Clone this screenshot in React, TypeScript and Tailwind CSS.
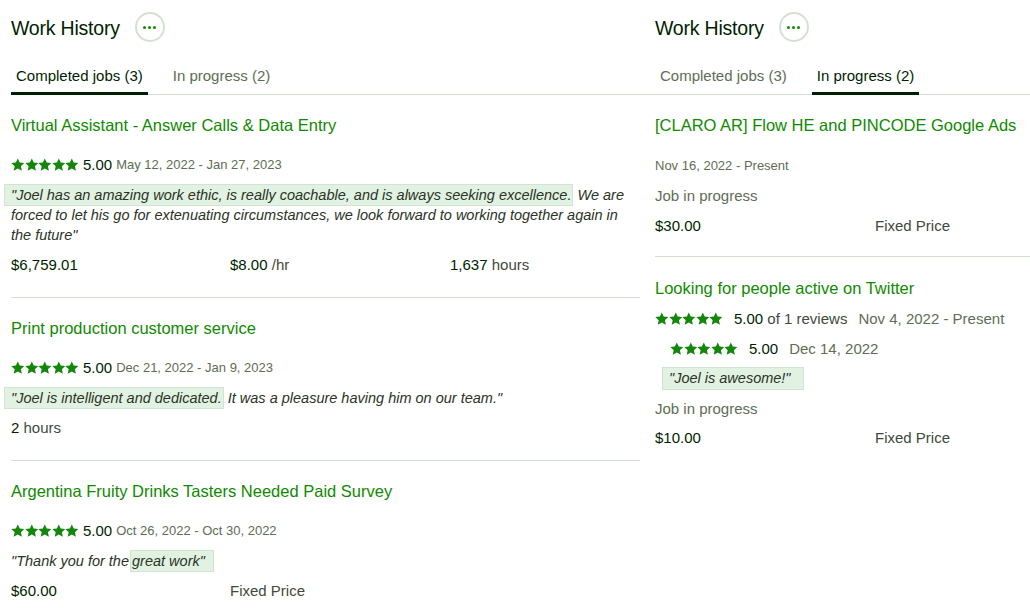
import React from "react";

const Star = () => (
  <svg width="13.6" height="13.6" viewBox="0 0 24 24" className="shrink-0">
    <path
      d="M12 0.8l3.4 7.3 8 .9-5.9 5.5 1.7 7.9L12 18.4l-7.2 4 1.7-7.9L.6 9l8-.9z"
      fill="#14870a"
    />
  </svg>
);

const Stars = () => (
  <span className="inline-flex items-center">
    <Star />
    <Star />
    <Star />
    <Star />
    <Star />
  </span>
);

const MoreBtn = () => (
  <div className="w-[30px] h-[30px] rounded-full border-2 border-[#d5e0d5] flex items-center justify-center gap-[2px] -mt-[4px] ml-[15px]">
    <span className="w-[3px] h-[3px] rounded-full bg-[#108a00]" />
    <span className="w-[3px] h-[3px] rounded-full bg-[#108a00]" />
    <span className="w-[3px] h-[3px] rounded-full bg-[#108a00]" />
  </div>
);

const Tabs = ({ active }: { active: 0 | 1 }) => (
  <div className="h-[37px] border-b border-[#d5e0d5] flex gap-[20px]">
    {["Completed jobs (3)", "In progress (2)"].map((t, i) => (
      <div
        key={t}
        className={
          i === active
            ? "h-[37px] px-[5px] pt-[8px] border-b-[3px] border-[#001e00] text-[15px] leading-[20px] text-[#001e00]"
            : "h-[37px] px-[5px] pt-[8px] text-[15px] leading-[20px] text-[#5e6d55]"
        }
      >
        {t}
      </div>
    ))}
  </div>
);

const TitleRow = () => (
  <div className="h-[58px] flex items-center">
    <h2 className="text-[19.5px] text-[#001e00] leading-none tracking-[-0.2px]">Work History</h2>
    <MoreBtn />
  </div>
);

const Title = ({ children }: { children: React.ReactNode }) => (
  <div className="text-[16.5px] leading-[22px] text-[#108a00]">{children}</div>
);

const hl =
  "bg-[#e2f2e2] border border-[#cfe5cf] pl-[6px] pr-[1px] py-[2px] -ml-[7px]";

export default function App() {
  return (
    <div
      className="w-[1030px] h-[616px] bg-white flex overflow-hidden text-[#001e00]"
      style={{ fontFamily: '"Liberation Sans", Arial, sans-serif' }}
    >
      {/* Left panel */}
      <div className="w-[645px] shrink-0">
        <div className="pl-[11px]">
          <TitleRow />
          <Tabs active={0} />
        </div>
        <div className="pl-[11px] pr-[5px]">
          {/* Job 1 */}
          <div className="pt-[19px] pb-[22px] border-b border-[#d5e0d5]">
            <Title>Virtual Assistant - Answer Calls &amp; Data Entry</Title>
            <div className="mt-[19px] h-[20px] flex items-center gap-[4px]">
              <Stars />
              <span className="text-[15px]">5.00</span>
              <span className="text-[13px] text-[#5e6d55]">May 12, 2022 - Jan 27, 2023</span>
            </div>
            <p className="mt-[10px] text-[14.5px] leading-[20px] italic text-[#2a3326]">
              <span className={hl}>
                "Joel has an amazing work ethic, is really coachable, and is always seeking excellence.
              </span>{" "}
              We are forced to let his go for extenuating circumstances, we look forward to working
              together again in the future"
            </p>
            <div className="mt-[10px] grid grid-cols-[219px_220px_1fr] text-[15px] leading-[20px]">
              <span>$6,759.01</span>
              <span>
                $8.00 <span className="text-[#404a3b]">/hr</span>
              </span>
              <span>
                1,637 <span className="text-[#404a3b]">hours</span>
              </span>
            </div>
          </div>

          {/* Job 2 */}
          <div className="pt-[19px] pb-[22px] border-b border-[#d5e0d5]">
            <Title>Print production customer service</Title>
            <div className="mt-[19px] h-[20px] flex items-center gap-[4px]">
              <Stars />
              <span className="text-[15px]">5.00</span>
              <span className="text-[13px] text-[#5e6d55]">Dec 21, 2022 - Jan 9, 2023</span>
            </div>
            <p className="mt-[10px] text-[14.5px] leading-[20px] italic text-[#2a3326]">
              <span className={hl}>"Joel is intelligent and dedicated.</span> It was a pleasure
              having him on our team."
            </p>
            <div className="mt-[10px] text-[15px] leading-[20px]">
              2 <span className="text-[#404a3b]">hours</span>
            </div>
          </div>

          {/* Job 3 */}
          <div className="pt-[19px] pb-[22px]">
            <Title>Argentina Fruity Drinks Tasters Needed Paid Survey</Title>
            <div className="mt-[19px] h-[20px] flex items-center gap-[4px]">
              <Stars />
              <span className="text-[15px]">5.00</span>
              <span className="text-[13px] text-[#5e6d55]">Oct 26, 2022 - Oct 30, 2022</span>
            </div>
            <p className="mt-[10px] text-[14.5px] leading-[20px] italic text-[#2a3326]">
              "Thank you for the{" "}
              <span className="bg-[#e2f2e2] border border-[#cfe5cf] pl-[1px] pr-[8px] py-[2px] -ml-[3px]">
                great work"
              </span>
            </p>
            <div className="mt-[10px] grid grid-cols-[219px_220px_1fr] text-[15px] leading-[20px]">
              <span>$60.00</span>
              <span className="text-[#404a3b]">Fixed Price</span>
            </div>
          </div>
        </div>
      </div>

      {/* Right panel */}
      <div className="flex-1">
        <div className="pl-[10px]">
          <TitleRow />
        </div>
        <div className="pl-[10px] border-b border-[#d5e0d5]">
          <div className="-mb-px">
            <Tabs active={1} />
          </div>
        </div>
        <div className="pl-[10px]">
          {/* In-progress job 1 */}
          <div className="pt-[19px] pb-[20px] border-b border-[#d5e0d5]">
            <Title>[CLARO AR] Flow HE and PINCODE Google Ads</Title>
            <div className="mt-[20px] h-[20px] flex items-center text-[13px] text-[#5e6d55]">
              Nov 16, 2022 - Present
            </div>
            <div className="mt-[10px] text-[15px] leading-[20px] text-[#5e6d55]">Job in progress</div>
            <div className="mt-[10px] grid grid-cols-[220px_1fr] text-[15px] leading-[20px]">
              <span>$30.00</span>
              <span className="text-[#404a3b]">Fixed Price</span>
            </div>
          </div>

          {/* In-progress job 2 */}
          <div className="pt-[20px]">
            <Title>Looking for people active on Twitter</Title>
            <div className="mt-[10px] h-[20px] flex items-center text-[15px]">
              <Stars />
              <span className="ml-[11px]">
                5.00 <span className="text-[#404a3b]">of 1 reviews</span>
              </span>
              <span className="ml-[11px] text-[#5e6d55]">Nov 4, 2022 - Present</span>
            </div>
            <div className="mt-[10px] h-[20px] flex items-center text-[15px] pl-[15px]">
              <Stars />
              <span className="ml-[11px]">5.00</span>
              <span className="ml-[11px] text-[#5e6d55]">Dec 14, 2022</span>
            </div>
            <div className="mt-[8px] ml-[7px] inline-block bg-[#e2f2e2] border border-[#cfe5cf] pl-[6px] pr-[12px] text-[14.5px] leading-[21px] italic text-[#2a3326]">
              "Joel is awesome!"
            </div>
            <div className="mt-[9px] text-[15px] leading-[20px] text-[#5e6d55]">Job in progress</div>
            <div className="mt-[9px] grid grid-cols-[220px_1fr] text-[15px] leading-[20px]">
              <span>$10.00</span>
              <span className="text-[#404a3b]">Fixed Price</span>
            </div>
          </div>
        </div>
      </div>
    </div>
  );
}
